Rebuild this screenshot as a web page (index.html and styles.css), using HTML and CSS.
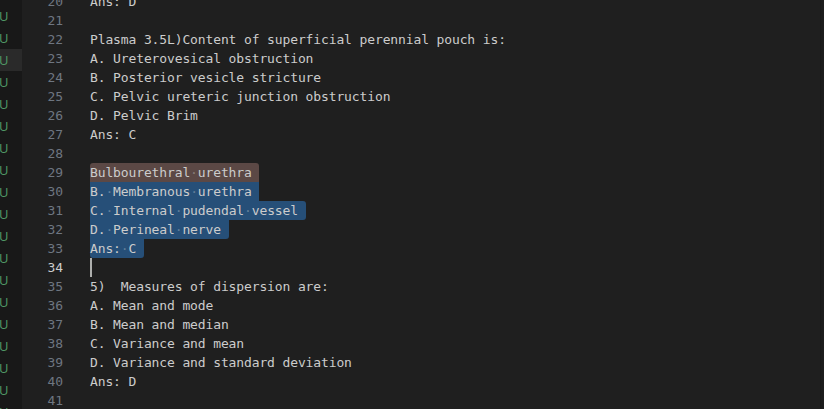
FILE: index.html
```html
<!DOCTYPE html>
<html>
<head>
<meta charset="utf-8">
<link rel="stylesheet" href="styles.css">
</head>
<body>
<div class="app">
  <div class="sidebar">
    <div class="rows">
      <div class="row">U</div><div class="row">U</div><div class="row">U</div><div class="row hover">U</div>
      <div class="row">U</div><div class="row">U</div><div class="row">U</div><div class="row">U</div>
      <div class="row">U</div><div class="row">U</div><div class="row">U</div><div class="row">U</div>
      <div class="row">U</div><div class="row">U</div><div class="row">U</div><div class="row">U</div>
      <div class="row">U</div><div class="row">U</div><div class="row">U</div><div class="row">U</div>
    </div>
  </div>
  <div class="editor">
    <div class="lines">
      <div class="line"><span class="ln">20</span><span class="code">Ans: D</span></div>
      <div class="line"><span class="ln">21</span><span class="code"></span></div>
      <div class="line"><span class="ln">22</span><span class="code">Plasma 3.5L)Content of superficial perennial pouch is:</span></div>
      <div class="line"><span class="ln">23</span><span class="code">A. Ureterovesical obstruction</span></div>
      <div class="line"><span class="ln">24</span><span class="code">B. Posterior vesicle stricture</span></div>
      <div class="line"><span class="ln">25</span><span class="code">C. Pelvic ureteric junction obstruction</span></div>
      <div class="line"><span class="ln">26</span><span class="code">D. Pelvic Brim</span></div>
      <div class="line"><span class="ln">27</span><span class="code">Ans: C</span></div>
      <div class="line"><span class="ln">28</span><span class="code"></span></div>
      <div class="line"><span class="ln">29</span><span class="code"><span class="sel match s29">Bulbourethral<span class="ws">·</span>urethra</span></span></div>
      <div class="line"><span class="ln">30</span><span class="code"><span class="sel s30">B.<span class="ws">·</span>Membranous<span class="ws">·</span>urethra</span></span></div>
      <div class="line"><span class="ln">31</span><span class="code"><span class="sel s31">C.<span class="ws">·</span>Internal<span class="ws">·</span>pudendal<span class="ws">·</span>vessel</span></span></div>
      <div class="line"><span class="ln">32</span><span class="code"><span class="sel s32">D.<span class="ws">·</span>Perineal<span class="ws">·</span>nerve</span></span></div>
      <div class="line"><span class="ln">33</span><span class="code"><span class="sel s33">Ans:<span class="ws">·</span>C</span></span></div>
      <div class="line current"><span class="ln">34</span><span class="code"><span class="cursor"></span></span></div>
      <div class="line"><span class="ln">35</span><span class="code">5)  Measures of dispersion are:</span></div>
      <div class="line"><span class="ln">36</span><span class="code">A. Mean and mode</span></div>
      <div class="line"><span class="ln">37</span><span class="code">B. Mean and median</span></div>
      <div class="line"><span class="ln">38</span><span class="code">C. Variance and mean</span></div>
      <div class="line"><span class="ln">39</span><span class="code">D. Variance and standard deviation</span></div>
      <div class="line"><span class="ln">40</span><span class="code">Ans: D</span></div>
      <div class="line"><span class="ln">41</span><span class="code"></span></div>
    </div>
  </div>
  <div class="scroll-edge"></div>
</div>
</body>
</html>
```
FILE: styles.css
```css
html, body {
  margin: 0;
  padding: 0;
  background: #1f1f1f;
  overflow: hidden;
}
.app {
  display: flex;
  width: 824px;
  height: 409px;
  overflow: hidden;
  background: #1f1f1f;
}
.sidebar {
  width: 22px;
  flex: none;
  background: #181818;
  overflow: hidden;
}
.rows {
  margin-top: -17px;
  display: flex;
  flex-direction: column;
}
.row {
  height: 22px;
  line-height: 22px;
  font-family: "Open Sans", "Noto Sans", sans-serif;
  font-size: 13px;
  color: #519a66;
  padding-left: 0;
  text-indent: -1px;
}
.row.hover {
  background: #2a2a2a;
}
.editor {
  flex: 1;
  overflow: hidden;
  font-family: "DejaVu Sans Mono", "Liberation Mono", monospace;
  font-size: 13px;
  letter-spacing: -0.126px;
  color: #cccccc;
}
.lines {
  margin-top: -8px;
  display: flex;
  flex-direction: column;
}
.line {
  height: 19px;
  line-height: 19px;
  display: flex;
  white-space: pre;
}
.ln {
  width: 41px;
  flex: none;
  text-align: right;
  color: #6e7681;
}
.line.current .ln {
  color: #cccccc;
}
.code {
  margin-left: 27px;
  display: flex;
}
.sel {
  display: inline-block;
  height: 19px;
  background: #264f78;
  padding-right: 7.7px;
}
.sel.match {
  background: #5b4845;
}
.ws {
  color: rgba(227, 228, 226, 0.32);
}
.s29 { border-radius: 3px 3px 0 0; }
.s30 { border-radius: 0; }
.s31 { border-radius: 0 3px 3px 0; }
.s32 { border-radius: 0 0 3px 0; }
.s33 { border-radius: 0 0 3px 3px; }
.cursor {
  display: inline-block;
  width: 2px;
  height: 19px;
  background: #aeafad;
}
.scroll-edge {
  width: 4px;
  flex: none;
  background: linear-gradient(to right, #161616 0, #1a1a1a 1px, #1c1c1c 4px);
}
```
